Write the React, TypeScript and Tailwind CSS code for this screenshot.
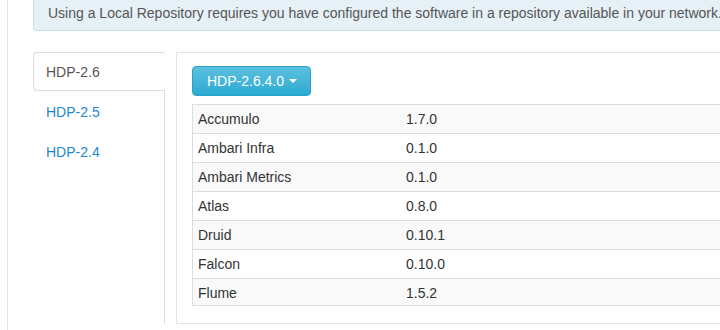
const versions = [
  { name: "Accumulo", version: "1.7.0" },
  { name: "Ambari Infra", version: "0.1.0" },
  { name: "Ambari Metrics", version: "0.1.0" },
  { name: "Atlas", version: "0.8.0" },
  { name: "Druid", version: "0.10.1" },
  { name: "Falcon", version: "0.10.0" },
  { name: "Flume", version: "1.5.2" },
];

const stacks = ["HDP-2.6", "HDP-2.5", "HDP-2.4"];

export default function App() {
  return (
    <div className="w-[720px] h-[330px] overflow-hidden bg-white font-['Liberation_Sans',Arial,sans-serif] text-[14px] leading-[20px] text-[#333]">
      <div className="ml-[7px] h-full w-[900px] border-l border-[#e3e3e3] pl-[25px]">
        {/* Info alert */}
        <div className="h-[31px] w-[760px] rounded-b-[4px] border border-t-0 border-[#c9dde8] bg-[#e6f1f7] pl-[14px] pt-[3px] whitespace-nowrap text-[#555]">
          Using a Local Repository requires you have configured the software in a repository available in your network.
        </div>

        <div className="mt-[21px] flex h-[272px] items-stretch">
          {/* Stack tabs */}
          <div className="flex w-[132px] flex-col">
            <div className="flex h-[39px] items-center rounded-l-[4px] border border-r-0 border-[#dddddd] pl-[12px] text-[#555]">
              {stacks[0]}
            </div>
            <div className="flex-1 border-r border-[#dddddd] pt-[1px]">
              {stacks.slice(1).map((s) => (
                <div key={s} className="flex h-[40px] items-center pl-[13px] text-[#1d87d2]">
                  {s}
                </div>
              ))}
            </div>
          </div>

          {/* Versions panel */}
          <div className="ml-[11px] w-[700px] border border-[#e3e3e3] pl-[15px] pt-[13px]">
            <button className="flex h-[30px] w-[119px] items-center rounded-[4px] border border-[#28a4c9] bg-linear-to-b from-[#5bc0de] to-[#2aabd2] pl-[14px] text-white">
              HDP-2.6.4.0
              <span className="ml-[5px] inline-block h-0 w-0 border-x-[4px] border-t-[4px] border-x-transparent border-t-white" />
            </button>

            <div className="mt-[8px] h-[202px] overflow-hidden border border-[#dddddd]">
              {versions.map((v, i) => (
                <div
                  key={v.name}
                  className={`flex h-[29px] items-center border-b border-[#dddddd] ${i % 2 === 0 ? "bg-[#f9f9f9]" : "bg-white"}`}
                >
                  <div className="w-[208px] pl-[5px]">{v.name}</div>
                  <div className="pl-[5px]">{v.version}</div>
                </div>
              ))}
            </div>
          </div>
        </div>
      </div>
    </div>
  );
}
